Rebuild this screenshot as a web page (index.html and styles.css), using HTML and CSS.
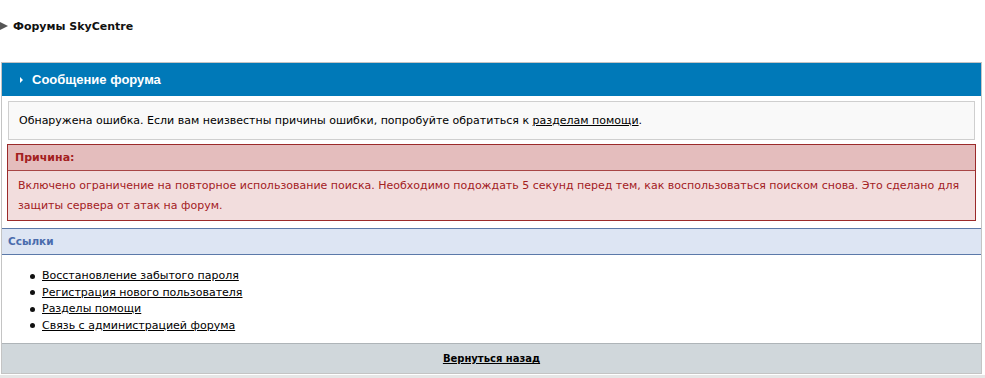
FILE: index.html
```html
<!DOCTYPE html>
<html lang="ru">
<head>
<meta charset="utf-8">
<title>Форумы SkyCentre</title>
<link rel="stylesheet" href="styles.css">
</head>
<body>
<div class="crumb"><span class="crumb-arrow"></span><b>Форумы SkyCentre</b></div>
<div class="panel">
  <div class="panel-head"><span class="head-arrow"></span>Сообщение форума</div>
  <div class="info">Обнаружена ошибка. Если вам неизвестны причины ошибки, попробуйте обратиться к <a href="#">разделам помощи</a>.</div>
  <div class="error">
    <div class="error-head">Причина:</div>
    <div class="error-body">Включено ограничение на повторное использование поиска. Необходимо подождать 5 секунд перед тем, как воспользоваться поиском снова. Это сделано для защиты сервера от атак на форум.</div>
  </div>
  <div class="links-head">Ссылки</div>
  <ul class="links">
    <li><a href="#">Восстановление забытого пароля</a></li>
    <li><a href="#">Регистрация нового пользователя</a></li>
    <li><a href="#">Разделы помощи</a></li>
    <li><a href="#">Связь с администрацией форума</a></li>
  </ul>
  <div class="back"><a href="#">Вернуться назад</a></div>
</div>
<div class="footer"></div>
</body>
</html>
```
FILE: styles.css
```css
html, body {
  margin: 0;
  padding: 0;
  background: #fff;
  font-family: "DejaVu Sans", Verdana, sans-serif;
  font-size: 11px;
  color: #000;
}
a { color: #000; text-decoration: underline; }

.crumb {
  display: flex;
  align-items: center;
  height: 14px;
  padding-top: 19px;
  font-size: 11px;
}
.crumb b { margin-left: 5px; color: #111; }
.crumb-arrow {
  width: 0; height: 0;
  border-top: 4px solid transparent;
  border-bottom: 4px solid transparent;
  border-left: 8px solid #555;
}

.panel {
  margin: 29px 3px 0 1px;
  border: 1px solid #c4c4c4;
  background: #fff;
}
.panel-head {
  display: flex;
  align-items: center;
  height: 33px;
  padding-left: 18px;
  background: #0079b8;
  color: #fff;
  font-family: "Liberation Sans", Arial, sans-serif;
  font-weight: bold;
  font-size: 13px;
}
.head-arrow {
  width: 0; height: 0;
  border-top: 3px solid transparent;
  border-bottom: 3px solid transparent;
  border-left: 3px solid #fff;
  margin-right: 9px;
}
.info {
  margin: 5px 6px 0 6px;
  border: 1px solid #cfcfcf;
  background: #f9f9f9;
  padding: 11px 10px 10px 10px;
  line-height: 16px;
}
.error {
  margin: 4px 5px 0 5px;
  border: 1px solid #9b2a2a;
  background: #f2dddd;
  color: #a3201e;
}
.error-head {
  background: #e4bdbd;
  border-bottom: 1px solid #a84646;
  font-weight: bold;
  font-size: 11px;
  padding: 0 7px;
  height: 25px;
  line-height: 25px;
}
.error-body {
  padding: 5px 10px 4px 10px;
  line-height: 20px;
}
.links-head {
  margin-top: 7px;
  border-top: 1px solid #5b79a9;
  border-bottom: 1px solid #5b79a9;
  background: #dde5f3;
  color: #4a6cad;
  font-weight: bold;
  font-size: 10.5px;
  height: 25px;
  line-height: 25px;
  padding-left: 6px;
}
.links {
  margin: 0;
  padding: 13px 0 0 40px;
  height: 75px;
  line-height: 16.5px;
  list-style: none;
}
.links li {
  display: flex;
  align-items: center;
}
.links li::before {
  content: "";
  width: 5px;
  height: 5px;
  border-radius: 50%;
  background: #111;
  margin: 0 7px 0 -12px;
}
.back {
  border-top: 1px solid #aeb4b8;
  background: #d0d7db;
  height: 29px;
  line-height: 29px;
  text-align: center;
  font-weight: bold;
  font-size: 10px;
}
.footer {
  margin-top: 1px;
  height: 8px;
  background: #e6e6e6;
}
```
